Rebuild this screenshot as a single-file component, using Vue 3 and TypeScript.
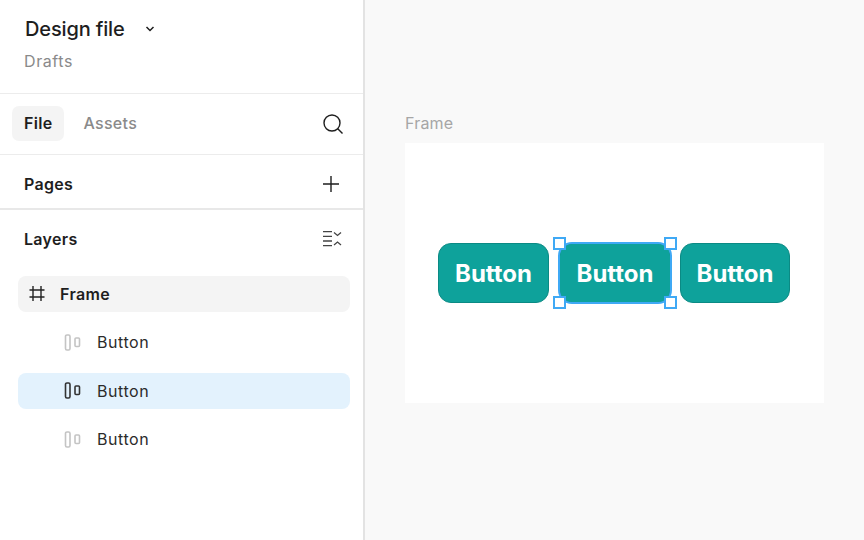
<script setup lang="ts">
const layers = [
  { id: 1, selected: false },
  { id: 2, selected: true },
  { id: 3, selected: false },
]
const buttons = [
  { id: 1, selected: false },
  { id: 2, selected: true },
  { id: 3, selected: false },
]
</script>

<template>
  <div class="app">
    <aside class="sidebar">
      <header class="file-head">
        <div class="title-row">
          <span class="title">Design file</span>
          <svg class="chev" width="10" height="8" viewBox="0 0 10 8" fill="none">
            <path d="M1.5 2l3.5 3.5L8.500 2" stroke="#1e1e1e" stroke-width="1.500" />
          </svg>
        </div>
        <div class="sub">Drafts</div>
      </header>

      <div class="tabs">
        <span class="tab active">File</span>
        <span class="tab">Assets</span>
        <svg class="search" width="22" height="22" viewBox="0 0 22 22" fill="none">
          <circle cx="10" cy="10" r="8" stroke="#1e1e1e" stroke-width="1.400" />
          <path d="M15.500 15.500L20.500 20.500" stroke="#1e1e1e" stroke-width="1.400" />
        </svg>
      </div>

      <div class="pages">
        <span class="section">Pages</span>
        <svg width="18" height="18" viewBox="0 0 18 18" fill="none">
          <path d="M9 1v16M1 9h16" stroke="#1e1e1e" stroke-width="1.400" />
        </svg>
      </div>

      <div class="layers-head">
        <span class="section">Layers</span>
        <svg width="20" height="18" viewBox="0 0 20 18" fill="none" stroke="#444" stroke-width="1.300">
          <path d="M1 1.700h9M1 6.300h9M1 11h9M1 15.700h9" />
          <path d="M12 2.500l3.500 3 3.500-3M12 15l3.500-3 3.500 3" />
        </svg>
      </div>

      <div class="tree">
        <div class="row frame-row">
          <svg class="hash" width="17" height="17" viewBox="0 0 17 17" fill="none" stroke="#222" stroke-width="1.400">
            <path d="M4 1v15M12 1v15M0.500 5h15M0.500 12h15" />
          </svg>
          <span class="frame-name">Frame</span>
        </div>
        <div v-for="l in layers" :key="l.id" class="row child" :class="{ selected: l.selected }">
          <svg class="layer-icon" width="17" height="17" viewBox="0 0 17 17" fill="none" :stroke="l.selected ? '#333' : '#c4c4c4'" stroke-width="1.600">
            <rect x="1.500" y="1" width="4.500" height="15" rx="1.400" />
            <rect x="11" y="4" width="4.500" height="8.500" rx="1" />
          </svg>
          <span class="layer-name">Button</span>
        </div>
      </div>
    </aside>

    <main class="canvas">
      <div class="frame-label">Frame</div>
      <div class="frame">
        <div v-for="b in buttons" :key="b.id" class="btn" :class="{ 'btn-selected': b.selected }">
          Button
          <template v-if="b.selected">
            <i class="handle tl" />
            <i class="handle tr" />
            <i class="handle bl" />
            <i class="handle br" />
          </template>
        </div>
      </div>
    </main>
  </div>
</template>

<style>
html, body { margin: 0; background: #fff; }
</style>

<style scoped>
.app {
  width: 864px;
  height: 540px;
  display: flex;
  overflow: hidden;
  font-family: Inter, "Liberation Sans", sans-serif;
  color: #1e1e1e;
}
.sidebar {
  width: 363px;
  flex: none;
  background: #fff;
  border-right: 2px solid #e3e3e3;
  display: flex;
  flex-direction: column;
}
.file-head {
  height: 94px;
  box-sizing: border-box;
  padding: 16px 24px 0 25px;
  border-bottom: 1px solid #ececec;
}
.title-row { display: flex; align-items: center; height: 26px; }
.title { font-size: 20px; font-weight: 500; letter-spacing: -0.15px; }
.chev { margin-left: 20px; }
.sub { margin-top: 7px; margin-left: -1px; font-size: 16px; letter-spacing: 0.6px; line-height: 24px; color: #8a8a8a; }
.tabs {
  height: 58px;
  flex: none;
  display: flex;
  align-items: center;
  padding: 0 19px 2px 12px;
  gap: 2px;
  border-bottom: 1px solid #ececec;
}
.tab {
  height: 35px;
  line-height: 35px;
  padding: 0 12px;
  margin-right: 5px;
  border-radius: 7px;
  font-size: 16px;
  letter-spacing: 0.3px;
  font-weight: 500;
  color: #8a8a8a;
}
.tab.active { background: #f4f4f4; color: #1e1e1e; font-weight: 600; }
.search { margin-left: auto; margin-top: 2px; }
.pages {
  height: 48px;
  flex: none;
  display: flex;
  align-items: center;
  justify-content: space-between;
  padding: 5px 23px 0 24px;
  border-bottom: 2px solid #e8e8e8;
  box-sizing: content-box;
}
.section { font-size: 16px; letter-spacing: 0.3px; font-weight: 600; }
.layers-head {
  height: 58px;
  flex: none;
  display: flex;
  align-items: center;
  justify-content: space-between;
  padding: 0 21px 0 24px;
}
.tree { padding: 8px 13px 0 18px; display: flex; flex-direction: column; gap: 13px; }
.row { height: 35.5px; border-radius: 8px; display: flex; align-items: center; }
.frame-row { background: #f4f4f4; padding-left: 11px; }
.frame-name { margin-left: 14px; font-size: 16px; letter-spacing: 0.35px; font-weight: 600; }
.child { padding-left: 46px; }
.child.selected { background: #e3f2fd; }
.layer-name { margin-left: 16px; font-size: 16px; letter-spacing: 0.55px; color: #2b2b2b; }
.canvas {
  flex: 1;
  background: #f9f9f9;
  padding: 0 40px;
}
.frame-label {
  margin-top: 111px;
  height: 32px;
  line-height: 24px;
  font-size: 16px;
  letter-spacing: 0.2px;
  color: #a6a6a6;
}
.frame {
  height: 260px;
  background: #fff;
  display: flex;
  align-items: center;
  padding-left: 33px;
  gap: 10px;
}
.btn {
  position: relative;
  width: 111px;
  height: 60px;
  box-sizing: border-box;
  border-radius: 13px;
  background: #0ea29b;
  border: 1px solid #0b8a84;
  color: #fff;
  font-size: 24px;
  font-weight: 700;
  display: flex;
  align-items: center;
  justify-content: center;
}
.btn:last-child { width: 110px; }
.btn-selected {
  width: 112px;
  outline: 2px solid #3fa9f5;
  outline-offset: -1px;
  margin-right: -1px;
}
.handle {
  position: absolute;
  width: 13px;
  height: 13px;
  box-sizing: border-box;
  background: #fff;
  border: 2px solid #3fa9f5;
}
.tl { left: -7px; top: -7px; }
.tr { right: -7px; top: -7px; }
.bl { left: -7px; bottom: -7px; }
.br { right: -7px; bottom: -7px; }
</style>
